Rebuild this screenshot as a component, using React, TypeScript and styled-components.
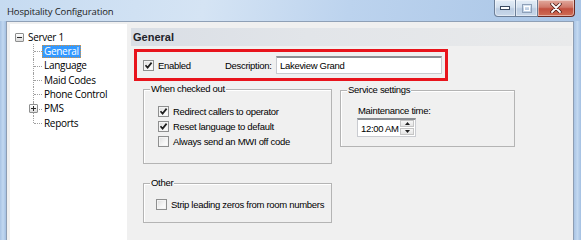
import React from 'react'
import styled, { createGlobalStyle } from 'styled-components'

const GlobalStyle = createGlobalStyle`
  html, body {
    margin: 0;
    padding: 0;
    background: #ffffff;
  }
  body {
    font-family: "Liberation Sans", Arial, sans-serif;
  }
`

const Window = styled.div`
  width: 581px;
  height: 240px;
  overflow: hidden;
  display: flex;
  flex-direction: column;
  background: #bcd3ec;
`

const TitleBar = styled.div`
  height: 21px;
  flex: none;
  display: flex;
  justify-content: space-between;
  align-items: flex-start;
  background: linear-gradient(100deg, #c6dbf1 0%, #d5e4f4 35%, #bcd3ee 60%, #a9c5e6 100%);
`

const Title = styled.div`
  padding: 5px 0 0 7px;
  font-family: "Open Sans", "Noto Sans", sans-serif;
  font-size: 9.5px;
  line-height: 13px;
  letter-spacing: -0.15px;
  color: #1b1b1b;
`

const Caption = styled.div`
  display: flex;
  margin-right: 6px;
  height: 17px;
`

const CaptionButton = styled.div<{ $kind: 'min' | 'max' | 'close' }>`
  width: ${({ $kind }) => ($kind === 'close' ? 37 : 22)}px;
  height: 17px;
  box-sizing: border-box;
  display: flex;
  align-items: center;
  justify-content: center;
  border: 1px solid ${({ $kind }) => ($kind === 'close' ? '#6b2a22' : '#6d7f98')};
  border-top: none;
  border-left: ${({ $kind }) => ($kind === 'min' ? '1px solid #6d7f98' : 'none')};
  border-radius: ${({ $kind }) =>
    $kind === 'min' ? '0 0 0 4px' : $kind === 'close' ? '0 0 4px 0' : '0'};
  background: ${({ $kind }) =>
    $kind === 'close'
      ? 'linear-gradient(180deg, #e2aa9e 0%, #d0796a 45%, #c2503f 55%, #cf6d55 100%)'
      : 'linear-gradient(180deg, #e4edf7 0%, #d2dfee 45%, #bccde2 55%, #c9d8ea 100%)'};
  box-shadow: inset 0 0 0 1px rgba(255, 255, 255, 0.45);
`

const Body = styled.div`
  flex: 1;
  display: flex;
  min-height: 0;
`

const FrameEdge = styled.div<{ $side: 'left' | 'right' }>`
  flex: none;
  width: ${({ $side }) => ($side === 'left' ? 6 : 7)}px;
  background: linear-gradient(90deg, #a9c4e4, #c2d8f0 50%, #a4c0e2);
  border-${({ $side }) => ($side === 'left' ? 'right' : 'left')}: 1px solid #8d9db2;
`

const Client = styled.div`
  flex: 1;
  display: flex;
  align-items: stretch;
  background: #f0f0f0;
  border-top: 1px solid #8fa0b6;
`

const Tree = styled.div`
  width: 117px;
  flex: none;
  margin: 2px 0 0 3px;
  padding-top: 6px;
  box-sizing: border-box;
  background: #ffffff;
  font-family: "Open Sans", "Noto Sans", sans-serif;
  font-size: 10px;
  letter-spacing: -0.3px;
  color: #000;
`

const TreeRow = styled.div<{ $indent: number }>`
  height: 14.33px;
  display: flex;
  align-items: center;
  padding-left: ${({ $indent }) => $indent}px;
`

const Expander = styled.div`
  width: 9px;
  height: 9px;
  box-sizing: border-box;
  border: 1px solid #8e8f8f;
  border-radius: 1px;
  background: linear-gradient(180deg, #ffffff, #dcdcdc);
  display: flex;
  align-items: center;
  justify-content: center;
  position: relative;
  z-index: 1;
`

const Connector = styled.div<{ $last?: boolean }>`
  width: 9px;
  height: 100%;
  flex: none;
  position: relative;
  display: flex;
  align-items: center;
  &::before {
    content: '';
    position: absolute;
    left: 0;
    top: 0;
    height: ${({ $last }) => ($last ? '50%' : '100%')};
    border-left: 1px dotted #a0a0a0;
  }
  &::after {
    content: '';
    position: absolute;
    left: 1px;
    right: 0;
    top: 50%;
    border-top: 1px dotted #a0a0a0;
  }
`

const ConnectorExpander = styled(Expander)`
  margin-left: -4px;
`

const Label = styled.span<{ $selected?: boolean }>`
  padding: 0 2px;
  line-height: 13px;
  white-space: nowrap;
  background: ${({ $selected }) => ($selected ? '#3399ff' : 'transparent')};
  color: ${({ $selected }) => ($selected ? '#ffffff' : '#000000')};
  outline: ${({ $selected }) => ($selected ? '1px dotted #d8913a' : 'none')};
  outline-offset: -1px;
`

const RootLabel = styled(Label)`
  margin-left: 2px;
`

const Panel = styled.div`
  flex: 1;
  margin: 6px 1px 0 4px;
  display: flex;
  flex-direction: column;
  font-size: 9.5px;
  letter-spacing: -0.3px;
  color: #000;
`

const PanelHeader = styled.div`
  height: 18px;
  flex: none;
  display: flex;
  align-items: center;
  padding-left: 2px;
  background: linear-gradient(90deg, #d9dee5 0%, #e2e5e9 40%, #e9eaeb 100%);
  font-size: 11px;
  font-weight: bold;
  letter-spacing: 0;
  color: #1f2329;
`

const Highlight = styled.div`
  width: 314px;
  height: 32px;
  box-sizing: border-box;
  margin: 3px 0 0 3px;
  border: 3px solid #e8141c;
  display: flex;
  align-items: center;
  padding-left: 6px;
`

const CheckRow = styled.div<{ $width?: number }>`
  height: 15px;
  display: flex;
  align-items: center;
  gap: 4px;
  width: ${({ $width }) => ($width ? `${$width}px` : 'auto')};
  flex: none;
  white-space: nowrap;
`

const Box = styled.div`
  width: 11px;
  height: 11px;
  flex: none;
  box-sizing: border-box;
  border: 1px solid #8e8f8f;
  background: linear-gradient(135deg, #dcdcdc 0%, #f6f6f6 60%, #ffffff 100%);
  box-shadow: inset 0 0 0 1px #f4f4f4;
  display: flex;
  align-items: center;
  justify-content: center;
`

const FieldLabel = styled.span`
  width: 51px;
  flex: none;
  white-space: nowrap;
`

const TextBox = styled.div<{ $width: number }>`
  width: ${({ $width }) => $width}px;
  height: 18px;
  box-sizing: border-box;
  flex: none;
  display: flex;
  align-items: center;
  padding-left: 3px;
  background: #ffffff;
  border: 1px solid #c9cbd0;
  border-top: 2px solid #8c8f94;
  white-space: nowrap;
`

const GroupArea = styled.div`
  padding-left: 12px;
  margin-top: 8px;
  display: flex;
  flex-direction: column;
`

const GroupRow = styled.div<{ $gap?: number }>`
  display: flex;
  align-items: flex-start;
  gap: 8px;
  margin-top: ${({ $gap }) => $gap ?? 0}px;
`

const Group = styled.div<{ $width: number; $height: number; $pad: string; $top?: number }>`
  position: relative;
  width: ${({ $width }) => $width}px;
  height: ${({ $height }) => $height}px;
  margin-top: ${({ $top }) => $top ?? 0}px;
  box-sizing: border-box;
  border: 1px solid #b4b4b4;
  box-shadow: inset 1px 1px 0 #ffffff;
  padding: ${({ $pad }) => $pad};
  display: flex;
  flex-direction: column;
  align-items: flex-start;
`

const Legend = styled.span`
  position: absolute;
  top: -7px;
  left: 6px;
  padding: 0 1px;
  line-height: 12px;
  background: #f0f0f0;
  white-space: nowrap;
`

const SmallLabel = styled.div`
  line-height: 12px;
  white-space: nowrap;
`

const Spinner = styled.div`
  margin: 1px 0 0 -1px;
  width: 59px;
  height: 19px;
  box-sizing: border-box;
  display: flex;
  background: #ffffff;
  border: 1px solid #c9cbd0;
  border-top: 2px solid #8c8f94;
`

const SpinText = styled.div`
  flex: 1;
  display: flex;
  align-items: center;
  padding-left: 3px;
  white-space: nowrap;
`

const SpinButtons = styled.div`
  width: 14px;
  display: flex;
  flex-direction: column;
  gap: 1px;
  padding: 0 1px 1px 0;
`

const SpinButton = styled.div`
  flex: 1;
  display: flex;
  align-items: center;
  justify-content: center;
  border: 1px solid #c5c5c5;
  background: linear-gradient(180deg, #f7f7f7, #e4e4e4);
`

const Check = ({ checked }: { checked?: boolean }) => (
  <Box>
    {checked && (
      <svg width="9" height="9" viewBox="0 0 9 9">
        <path d="M1.5 4.2 L3.6 6.6 L7.6 1.6" fill="none" stroke="#1e1e1e" strokeWidth="1.7" />
      </svg>
    )}
  </Box>
)

const CheckItem = ({ checked, label, width }: { checked?: boolean; label: string; width?: number }) => (
  <CheckRow $width={width}>
    <Check checked={checked} />
    <span>{label}</span>
  </CheckRow>
)

const Glyph = ({ kind }: { kind: 'min' | 'max' | 'close' }) => {
  if (kind === 'min')
    return (
      <svg width="10" height="6" viewBox="0 0 10 6">
        <rect x="0.5" y="1.5" width="9" height="3" fill="#fff" stroke="#3b4a60" />
      </svg>
    )
  if (kind === 'max')
    return (
      <svg width="10" height="9" viewBox="0 0 10 9">
        <rect x="0.5" y="0.5" width="9" height="8" fill="none" stroke="#8ea0b8" />
        <rect x="2.5" y="2.5" width="5" height="4" fill="none" stroke="#ffffff" />
      </svg>
    )
  return (
    <svg width="12" height="10" viewBox="0 0 12 10">
      <path d="M2 1 L10 9 M10 1 L2 9" stroke="#4a1a14" strokeWidth="3.4" strokeLinecap="round" />
      <path d="M2 1 L10 9 M10 1 L2 9" stroke="#ffffff" strokeWidth="1.8" strokeLinecap="round" />
    </svg>
  )
}

const Minus = () => (
  <svg width="5" height="5" viewBox="0 0 5 5">
    <rect x="0" y="2" width="5" height="1" fill="#2a2a2a" />
  </svg>
)

const Plus = () => (
  <svg width="5" height="5" viewBox="0 0 5 5">
    <rect x="0" y="2" width="5" height="1" fill="#2a2a2a" />
    <rect x="2" y="0" width="1" height="5" fill="#2a2a2a" />
  </svg>
)

const Arrow = ({ up }: { up?: boolean }) => (
  <svg width="5" height="3" viewBox="0 0 5 3">
    <path d={up ? 'M0 3 L2.5 0 L5 3 Z' : 'M0 0 L2.5 3 L5 0 Z'} fill="#1e1e1e" />
  </svg>
)

const CHILDREN = [
  { label: 'General', selected: true },
  { label: 'Language' },
  { label: 'Maid Codes' },
  { label: 'Phone Control' },
  { label: 'PMS', expandable: true },
  { label: 'Reports' },
]

export default function App() {
  return (
    <>
      <GlobalStyle />
      <Window>
        <TitleBar>
          <Title>Hospitality Configuration</Title>
          <Caption>
            {(['min', 'max', 'close'] as const).map((k) => (
              <CaptionButton key={k} $kind={k}>
                <Glyph kind={k} />
              </CaptionButton>
            ))}
          </Caption>
        </TitleBar>
        <Body>
          <FrameEdge $side="left" />
          <Client>
            <Tree>
              <TreeRow $indent={5}>
                <Expander>
                  <Minus />
                </Expander>
                <RootLabel>Server 1</RootLabel>
              </TreeRow>
              {CHILDREN.map((c, i) => (
                <TreeRow key={c.label} $indent={23}>
                  <Connector $last={i === CHILDREN.length - 1}>
                    {c.expandable && (
                      <ConnectorExpander>
                        <Plus />
                      </ConnectorExpander>
                    )}
                  </Connector>
                  <Label $selected={c.selected}>{c.label}</Label>
                </TreeRow>
              ))}
            </Tree>
            <Panel>
              <PanelHeader>General</PanelHeader>
              <Highlight>
                <CheckItem checked label="Enabled" width={82} />
                <FieldLabel>Description:</FieldLabel>
                <TextBox $width={166}>Lakeview Grand</TextBox>
              </Highlight>
              <GroupArea>
                <GroupRow>
                  <Group $width={189} $height={75} $pad="14px 0 0 14px">
                    <Legend>When checked out</Legend>
                    <CheckItem checked label="Redirect callers to operator" />
                    <CheckItem checked label="Reset language to default" />
                    <CheckItem label="Always send an MWI off code" />
                  </Group>
                  <Group $width={175} $height={57} $pad="14px 0 0 17px" $top={1}>
                    <Legend>Service settings</Legend>
                    <SmallLabel>Maintenance time:</SmallLabel>
                    <Spinner>
                      <SpinText>12:00 AM</SpinText>
                      <SpinButtons>
                        <SpinButton>
                          <Arrow up />
                        </SpinButton>
                        <SpinButton>
                          <Arrow />
                        </SpinButton>
                      </SpinButtons>
                    </Spinner>
                  </Group>
                </GroupRow>
                <GroupRow $gap={19}>
                  <Group $width={189} $height={40} $pad="13px 0 0 12px">
                    <Legend>Other</Legend>
                    <CheckItem label="Strip leading zeros from room numbers" />
                  </Group>
                </GroupRow>
              </GroupArea>
            </Panel>
          </Client>
          <FrameEdge $side="right" />
        </Body>
      </Window>
    </>
  )
}
